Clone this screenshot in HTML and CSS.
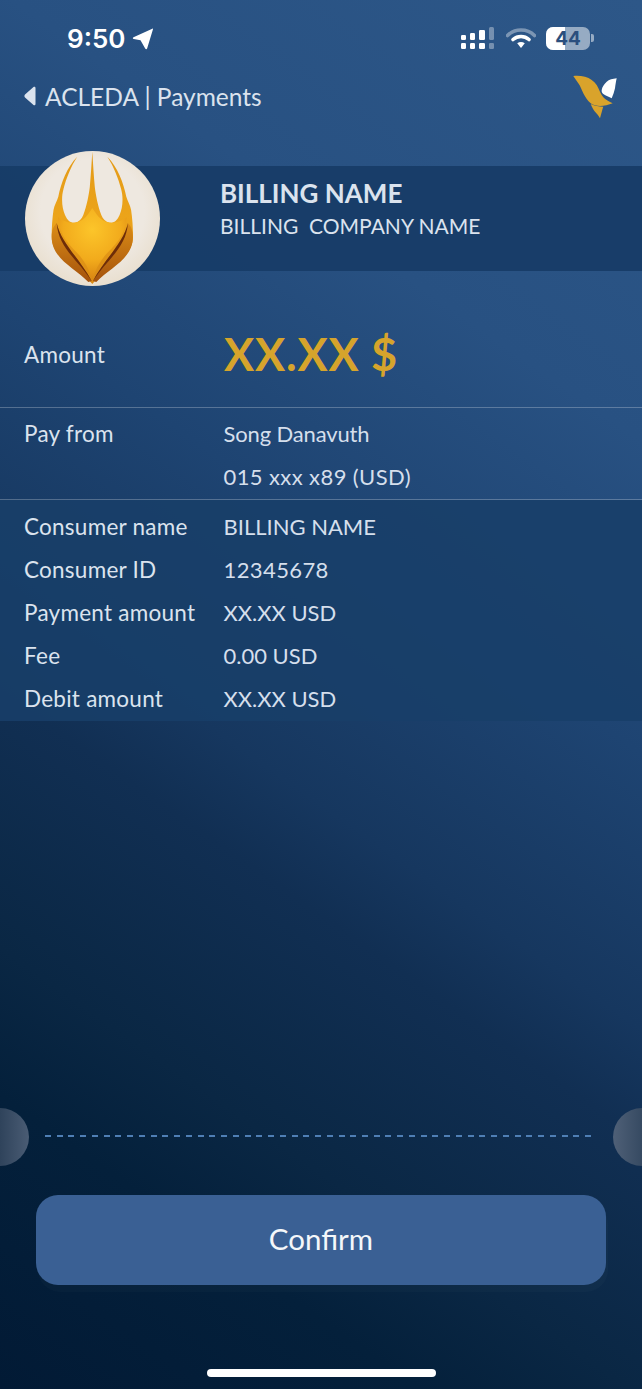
FILE: index.html
```html
<!DOCTYPE html>
<html lang="en">
<head>
<meta charset="utf-8">
<title>ACLEDA | Payments</title>
<link rel="stylesheet" href="styles.css">
</head>
<body>
<main class="screen">
  <header class="status">
    <div class="status-left">
      <span class="time">9:50</span>
      <svg class="loc" width="22" height="22" viewBox="0 0 22 22"><path d="M20.300.7 1.500 9.200c-1 .5-.8 1.600.2 1.800l6.800 1.300 4.700 8.200c.6 1 1.700.8 2-.3l5.700-18.600c.3-.9-.2-1.200-.6-.9z" fill="#fff"/></svg>
    </div>
    <div class="status-right">
      <svg class="signal" width="33" height="23" viewBox="0 0 33 23">
        <g fill="#fff">
          <rect x="0" y="8" width="5" height="5" rx="1.2"/><rect x="0" y="16" width="5" height="6" rx="1.2"/>
          <rect x="9" y="6" width="5" height="7" rx="1.2"/><rect x="9" y="16" width="5" height="6" rx="1.2"/>
          <rect x="18" y="3" width="6" height="10" rx="1.2"/><rect x="18" y="16" width="6" height="6" rx="1.2"/>
        </g>
        <g fill="#fff" opacity=".35">
          <rect x="28" y="0" width="5" height="13" rx="1.5"/><rect x="28" y="16" width="5" height="6" rx="1.2"/>
        </g>
      </svg>
      <svg class="wifi" width="30" height="22" viewBox="0 0 30 22">
        <path d="M1.500 8.500C9 1.200 21 1.200 28.500 8.500" fill="none" stroke="#fff" stroke-opacity=".38" stroke-width="3.600" stroke-linecap="round"/>
        <path d="M7 12.500c4.600-4 11.400-4 16 0" fill="none" stroke="#fff" stroke-width="3.600" stroke-linecap="round"/>
        <path d="M11.200 16.200c2.300-1.700 5.300-1.700 7.600 0L15 21z" fill="#fff"/>
      </svg>
      <div class="battery">
        <div class="battery-body"><span class="battery-fill"></span><span class="battery-num">44</span></div>
        <span class="battery-cap"></span>
      </div>
    </div>
  </header>

  <nav class="nav">
    <div class="back">
      <svg class="back-icon" width="12" height="20" viewBox="0 0 12 20"><path d="M9.500 1c.9-.6 2-.1 2 1v16c0 1.100-1.100 1.600-2 1L1 11.500c-.8-.7-.8-2.300 0-3z" fill="#dbe3ee"/></svg>
      <span>ACLEDA | Payments</span>
    </div>
    <svg class="bird" width="46" height="46" viewBox="0 0 46 46">
      <path d="M1.300 1C5 .6 9 .8 13 1.700c5 1.300 9 4.300 11.700 8.300 2.600 4 3.600 9 6.600 12.300 2.200 2.500 5.800 4.300 9.400 6-4 1.600-8.700 2.700-12.700 2.700-3.500 0-7-1-9.300-2.700-3-2.200-5.500-6.200-7.400-10-1.500-3.300-2.800-7-5-10C4.800 6 3 3.300 1.300 1z" fill="#d9a32b"/>
      <path d="M18.700 29c4 1.800 8.500 2.700 12.600 2.700-1 2.800-2 7-3.300 11.600-1.300-2.500-3.200-4.700-5-6.600-1.800-2.300-3.300-5-4.300-7.700z" fill="#d9a32b"/>
      <path d="M44.700 3.300c-4 .4-7.700 1.400-10 3.400-2.700 2.400-4.500 5.300-5 8.300-.3 1.600.4 3 1.600 4 2.500 1.600 5.800 2.800 8.400 4.300 1.500-3.300 2.600-6.600 3.300-10 .4-3.300 1-7 1.700-10z" fill="#fff"/>
    </svg>
  </nav>

  <section class="biller">
    <svg class="avatar" width="135" height="135" viewBox="0 0 135 135">
      <defs>
        <radialGradient id="disc" cx=".5" cy=".45" r=".55">
          <stop offset=".7" stop-color="#eee8e0"/><stop offset="1" stop-color="#e9dfcf"/>
        </radialGradient>
        <linearGradient id="flame" x1="0" y1="0" x2="0" y2="1">
          <stop offset="0" stop-color="#e39a18"/><stop offset=".5" stop-color="#eca41a"/><stop offset="1" stop-color="#d98a14"/>
        </linearGradient>
        <radialGradient id="core" cx=".5" cy=".3" r=".7">
          <stop offset="0" stop-color="#fcc52a"/><stop offset=".6" stop-color="#f2ab1c"/><stop offset="1" stop-color="#d98512"/>
        </radialGradient>
        <linearGradient id="petal" x1="0" y1="0" x2="0" y2="1">
          <stop offset="0" stop-color="#dc8d16"/><stop offset="1" stop-color="#a4520d"/>
        </linearGradient>
      </defs>
      <circle cx="67.500" cy="67.500" r="67.500" fill="url(#disc)"/>
      <path d="M67.300 133C56 118 26.700 108 26.700 86c0-10 .6-19 1.800-27 .8-5 3.500-9 4.800-13.300C36 32 42 16 52.300 5.700 46 15 41 28 38.500 38c-2.500 9-1.500 19 1.500 26 2.500 6 6.500 8.500 10 7.700 4-1 6.800-3.700 8.300-7.700 3.500-9 5.500-20 6.500-28 1-11 1.700-23 2.500-35.300.8 12.300 1.500 24.300 2.500 35.300 1 8 3 19 6.500 28 1.500 4 4.300 6.700 8.300 7.700 3.500.8 7.500-1.700 10-7.700 3-7 4-17 1.500-26C93.600 28 88.600 15 82.300 5.700 92.600 16 98.600 32 101.300 45.700c1.300 4.300 4 8.300 4.800 13.300 1.200 8 1.900 17 1.900 27 0 22-29.400 32-40.700 47z" fill="url(#flame)"/>
      <path d="M33 66c5 4 12 7 20 5 6-2 10-7 14.300-14 4.300 7 8.300 12 14.300 14 8 2 15-1 20-5-1 20-14 30-22 39-5 6-9.500 14-12.300 24-2.800-10-7.300-18-12.300-24-8-9-21-19-22-39z" fill="url(#core)"/>
      <path d="M31.700 72c4.300 20 23.300 36 35 58l-3.400 1C50 117 26.700 108 26.700 86c0-6 1.300-10 5-14z" fill="url(#petal)"/>
      <path d="M102.900 72c-4.300 20-23.300 36-35 58l3.400 1c13.300-14 36.600-23 36.600-45 0-6-1.300-10-5-14z" fill="url(#petal)"/>
      <path d="M31.700 72c4.300 20 23.300 36 35 58-13.500-21-33.500-33-35-58zM102.900 72c-4.300 20-23.300 36-35 58 13.500-21 33.500-33 35-58z" fill="#6d2d09"/>
    </svg>
    <div class="biller-text">
      <div class="biller-name">BILLING NAME</div>
      <div class="biller-company">BILLING  COMPANY NAME</div>
    </div>
  </section>

  <section class="amount-row">
    <span class="label">Amount</span>
    <span class="amount">XX.XX $</span>
  </section>

  <section class="pay-from">
    <span class="label">Pay from</span>
    <div class="pay-values">
      <span class="value value-tight">Song Danavuth</span>
      <span class="value value-wide">015 xxx x89 (USD)</span>
    </div>
  </section>

  <section class="details">
    <div class="row"><span class="label">Consumer name</span><span class="value">BILLING NAME</span></div>
    <div class="row"><span class="label">Consumer ID</span><span class="value value-wide">12345678</span></div>
    <div class="row"><span class="label">Payment amount</span><span class="value">XX.XX USD</span></div>
    <div class="row"><span class="label">Fee</span><span class="value">0.00 USD</span></div>
    <div class="row"><span class="label">Debit amount</span><span class="value">XX.XX USD</span></div>
  </section>

  <div class="perforation">
    <span class="notch notch-left"></span>
    <span class="dash"></span>
    <span class="notch notch-right"></span>
  </div>

  <div class="action">
    <button class="confirm" type="button">Confirm</button>
  </div>

  <div class="home-wrap"><span class="home"></span></div>
</main>
</body>
</html>
```

FILE: styles.css
```css
* { box-sizing: border-box; }
html, body { margin: 0; padding: 0; }
body { width: 642px; height: 1389px; overflow: hidden; background: #021a35; }

.screen {
  width: 642px;
  height: 1389px;
  display: flex;
  flex-direction: column;
  overflow: hidden;
  font-family: "Lato", "Noto Sans", sans-serif;
  color: #dbe3ee;
  background: linear-gradient(215deg, #2d5788 0%, #285182 24%, #1e4472 41%, #16375f 56%, #112f53 62%, #0a2744 76%, #04203b 84%, #021a35 100%);
}

.status {
  height: 76px;
  padding: 0 48px 0 67px;
  display: flex;
  justify-content: space-between;
  align-items: center;
}
.status-left { display: flex; align-items: center; gap: 7px; }
.time { font-family: "Inter", sans-serif; font-size: 26px; font-weight: 600; color: #fff; }
.loc { margin-top: 1px; }
.status-right { display: flex; align-items: center; }
.signal { margin-right: 12px; margin-top: 1px; }
.wifi { margin-right: 10px; }
.battery { display: flex; align-items: center; gap: 1px; }
.battery-body {
  position: relative;
  width: 44px;
  height: 23px;
  border-radius: 7px;
  background: rgba(255, 255, 255, .5);
  overflow: hidden;
  display: flex;
  align-items: center;
  justify-content: center;
}
.battery-fill { position: absolute; left: 0; top: 0; bottom: 0; width: 19px; background: #fff; }
.battery-num { position: relative; font-family: "Inter", sans-serif; font-size: 19px; font-weight: 700; color: #2b4f7e; }
.battery-cap { width: 3px; height: 8px; border-radius: 0 2px 2px 0; background: rgba(255, 255, 255, .5); }

.nav {
  height: 90px;
  padding: 0 24px;
  display: flex;
  justify-content: space-between;
  align-items: flex-start;
}
.back {
  display: flex;
  align-items: center;
  gap: 9px;
  height: 40px;
  font-size: 24.500px;
  color: #dbe3ee;
}
.back-icon { flex: none; }
.bird { margin-top: -1px; }

.biller {
  height: 105px;
  padding-left: 25px;
  display: flex;
  align-items: center;
  gap: 60px;
  background: rgba(23, 60, 103, .92);
}
.avatar { flex: none; margin: -15px 0; }
.biller-text { margin-top: -18px; }
.biller-name { font-size: 26px; font-weight: 700; line-height: 32px; color: #dbe3ee; }
.biller-company { font-size: 21px; line-height: 34px; color: #dbe3ee; white-space: pre; }

.label { width: 199px; flex: none; font-size: 22.500px; letter-spacing: .25px; color: #dbe3ee; }
.value { font-size: 22px; color: #d5dfec; }
.value-wide { letter-spacing: .4px; }
.value-tight { letter-spacing: -.15px; }

.amount-row {
  height: 137px;
  padding: 30px 0 0 24px;
  display: flex;
  align-items: center;
  border-bottom: 1px solid rgba(255, 255, 255, .25);
}
.amount-row .label { width: 200px; }
.amount { font-size: 45px; font-weight: 700; color: #d6a42c; letter-spacing: .8px; margin-top: -1px; }

.pay-from {
  height: 92px;
  padding: 4px 0 0 24px;
  display: flex;
  align-items: flex-start;
  border-bottom: 1px solid rgba(255, 255, 255, .25);
}
.pay-from .label { width: 199.500px; line-height: 43px; }
.pay-values { display: flex; flex-direction: column; }
.pay-values .value { line-height: 43px; }

.details {
  height: 221px;
  padding: 5px 0 0 24px;
  display: flex;
  flex-direction: column;
  background: rgba(24, 63, 105, .88);
}
.details .label { width: 199.500px; }
.row { display: flex; height: 43px; align-items: center; }

.perforation {
  margin-top: 387px;
  height: 58px;
  display: flex;
  align-items: center;
  justify-content: space-between;
}
.notch { width: 29px; height: 58px; }
.notch-left { border-radius: 0 29px 29px 0; background: linear-gradient(90deg, #2f435b, #4a5c74); }
.notch-right { border-radius: 29px 0 0 29px; background: linear-gradient(270deg, #364a62, #4f6077); }
.dash {
  flex: none;
  width: 547px;
  height: 2px;
  margin: 0 6px 2px 0;
  background: repeating-linear-gradient(90deg, #4f7fb5 0 6px, transparent 6px 11.740px);
}

.action { padding: 29px 36px 0; }
.confirm {
  display: block;
  width: 570px;
  height: 90px;
  border: 0;
  border-radius: 22px;
  background: #3a6094;
  box-shadow: 2px 7px 0 rgba(255, 255, 255, .02);
  font-family: inherit;
  font-size: 29.500px;
  color: #f4f7fa;
  padding-bottom: 4px;
}

.home-wrap { padding-top: 84px; display: flex; justify-content: center; }
.home { width: 229px; height: 8px; border-radius: 4px; background: #fff; }
```
